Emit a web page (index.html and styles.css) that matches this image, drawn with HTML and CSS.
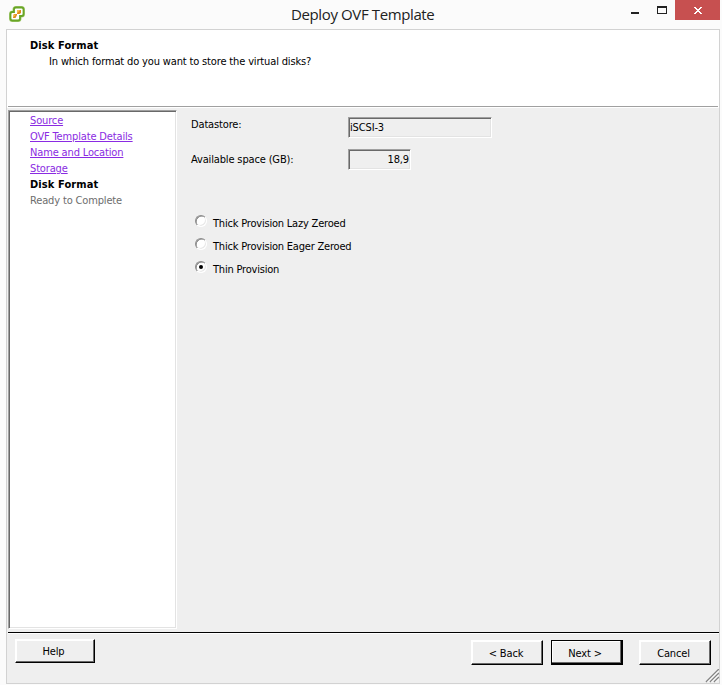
FILE: index.html
```html
<!DOCTYPE html>
<html lang="en">
<head>
<meta charset="utf-8">
<title>Deploy OVF Template</title>
<link rel="stylesheet" href="styles.css">
</head>
<body>
<div class="window">
  <header class="titlebar">
    <svg class="app-icon" width="18" height="18" viewBox="0 0 18 18">
      <path d="M8 2.5H13.5Q15.5 2.5 15.5 4.5V9Q15.5 11 13.5 11H12V13.5Q12 15.5 10 15.5H4.5Q2.5 15.5 2.5 13.5V9Q2.5 7 4.5 7H6V4.5Q6 2.5 8 2.5Z" fill="#fff" stroke="#a9cd78" stroke-width="3"/>
      <path d="M8 2.5H13.5Q15.5 2.5 15.5 4.5V9Q15.5 11 13.5 11H12V13.5Q12 15.5 10 15.5H4.5Q2.5 15.5 2.5 13.5V9Q2.5 7 4.5 7H6V4.5Q6 2.5 8 2.5Z" fill="#fff" stroke="#69a526" stroke-width="1.8"/>
      <path d="M9 5H13V8L11.5 9H9V10L7.5 13H5V10L6.5 9H9Z" fill="#e08a1c"/>
      <path d="M9 5H12L9 8.5ZM5 10L8 9.5L5 12.5Z" fill="#f8c050"/>
    </svg>
    <h1 class="title">Deploy OVF Template</h1>
    <div class="controls">
      <svg class="minmax" width="42" height="20" viewBox="0 0 42 20" shape-rendering="crispEdges">
        <path d="M0 12h8v2H0z" fill="#222"/>
        <path d="M26 6h10v8H26zM27 8v5h8V8z" fill="#222" fill-rule="evenodd"/>
      </svg>
      <div class="close">
        <svg width="8" height="7" viewBox="0 0 8 7" shape-rendering="crispEdges">
          <path d="M0 0h2v1h1v1h2V1h1V0h2v1H7v1H6v1H5v1h1v1h1v1h1v1H6V6H5V5H3v1H2v1H0V6h1V5h1V4h1V3H2V2H1V1H0z" fill="#fff"/>
        </svg>
      </div>
    </div>
  </header>
  <main class="client">
    <section class="banner">
      <h2 class="banner-title">Disk Format</h2>
      <p class="banner-text">In which format do you want to store the virtual disks?</p>
    </section>
    <div class="body">
      <nav class="steps">
        <a class="step link">Source</a>
        <a class="step link">OVF Template Details</a>
        <a class="step link">Name and Location</a>
        <a class="step link">Storage</a>
        <span class="step current">Disk Format</span>
        <span class="step pending">Ready to Complete</span>
      </nav>
      <section class="form">
        <div class="row"><span class="label">Datastore:</span><span class="field wide">iSCSI-3</span></div>
        <div class="row space"><span class="label">Available space (GB):</span><span class="field narrow">18,9</span></div>
        <div class="options">
          <div class="option"><span class="radio"></span><span class="option-text">Thick Provision Lazy Zeroed</span></div>
          <div class="option"><span class="radio"></span><span class="option-text">Thick Provision Eager Zeroed</span></div>
          <div class="option"><span class="radio checked"></span><span class="option-text">Thin Provision</span></div>
        </div>
      </section>
    </div>
    <footer class="footer">
      <button class="btn help">Help</button>
      <button class="btn back">&lt; Back</button>
      <button class="btn next">Next &gt;</button>
      <button class="btn cancel">Cancel</button>
      <svg class="grip" width="14" height="14" viewBox="0 0 14 14"><path d="M1 13L14 0M5 13L14 4M9 13L14 8" stroke="#858585" stroke-width="1.5"/><path d="M2.5 13L14 1.5M6.5 13L14 5.5M10.5 13L14 9.5" stroke="#fff"/></svg>
    </footer>
  </main>
</div>
</body>
</html>
```

FILE: styles.css
```css
* { box-sizing: border-box; }
body {
  margin: 0;
  background: #fbfbfb;
  color: #000;
  font: 11px/16px "DejaVu Sans Condensed", "DejaVu Sans", sans-serif;
  letter-spacing: -0.15px;
  white-space: nowrap;
}
h1, h2, p { margin: 0; }
.window { width: 722px; height: 685px; padding: 0 2px 1px 6px; display: flex; flex-direction: column; overflow: hidden; }
.titlebar { height: 29px; flex: none; display: flex; align-items: flex-start; }
.app-icon { margin: 5px 0 0 2px; flex: none; }
.title { width: 144px; margin-left: 265px; font: 15px/29px "Open Sans", sans-serif; letter-spacing: -0.38px; color: #222; }
.controls { margin-left: auto; display: flex; }
.minmax { margin-right: 2px; }
.close { width: 45px; height: 20px; background: #c75050; display: flex; align-items: center; justify-content: center; padding-top: 1px; }
.client { flex: 1; border: 1px solid #d2d2d2; background: #efefef; display: flex; flex-direction: column; }
.banner { height: 78px; flex: none; background: linear-gradient(#a0a0a0, #a0a0a0) 1px 76px / 710px 1px no-repeat #fff; padding: 7px 0 0 23px; }
.banner-title { font: bold 11px/17px "DejaVu Sans Condensed", "DejaVu Sans", sans-serif; letter-spacing: 0.1px; }
.banner-text { padding-left: 19px; }
.body { height: 524px; flex: none; display: flex; padding: 2px 0 0 1px; }
.steps { width: 169px; height: 519px; border: 1px solid; border-color: #a0a0a0 #fff #fff #a0a0a0; box-shadow: inset 1px 1px #696969, inset -1px -1px #e3e3e3; background: #fff; padding: 2px 0 0 21px; display: flex; flex-direction: column; align-items: flex-start; }
.link { color: #8a2be2; text-decoration: underline; text-underline-offset: 1px; }
.current { font-weight: bold; letter-spacing: 0.1px; }
.pending { color: #6d6d6d; }
.form { padding: 7px 0 0 14px; }
.row { display: flex; height: 32px; }
.label { width: 157px; }
.space .label { padding-top: 3px; }
.field { height: 21px; border: 1px solid; border-color: #a0a0a0 #fff #fff #a0a0a0; box-shadow: inset 1px 1px #696969, inset -1px -1px #e3e3e3; line-height: 19px; padding: 0 1px; }
.wide { width: 144px; }
.narrow { width: 63px; text-align: right; }
.options { padding: 35px 0 0 4px; }
.option { display: flex; height: 23px; }
.option-text { letter-spacing: -0.2px; }
.radio { width: 12px; height: 12px; margin: -1px 6px 0 0; border-radius: 50%; border: 1px solid; border-color: #8c8c8c #fff #fff #8c8c8c; background: #fff; box-shadow: inset 0.6px 0.6px #696969, inset -1px -1px #e8e8e8; display: flex; align-items: center; justify-content: center; }
.checked::before { content: ""; width: 4px; height: 4px; border-radius: 50%; background: #000; }
.footer { flex: 1; margin-left: 1px; border-top: 1px solid #000; box-shadow: inset 0 1px #fff; position: relative; display: flex; align-items: flex-start; padding: 7px 7px 0; }
.btn { height: 25px; width: 72px; padding: 2px 3px 0 0; border: 1px solid; border-color: #fff #000 #000 #fff; background: #efefef; box-shadow: inset -1px -1px #696969, inset 1px 1px #fff; font: inherit; letter-spacing: inherit; color: inherit; margin: 0; }
.help { width: 80px; height: 24px; margin: -1px 376px 0 0; padding-top: 1px; }
.back { padding-right: 2px; }
.next { margin: 0 16px 0 8px; padding-top: 3px; border-color: #000; border-width: 1px 2px 2px 1px; }
.grip { position: absolute; right: 0; bottom: 0; }
```
